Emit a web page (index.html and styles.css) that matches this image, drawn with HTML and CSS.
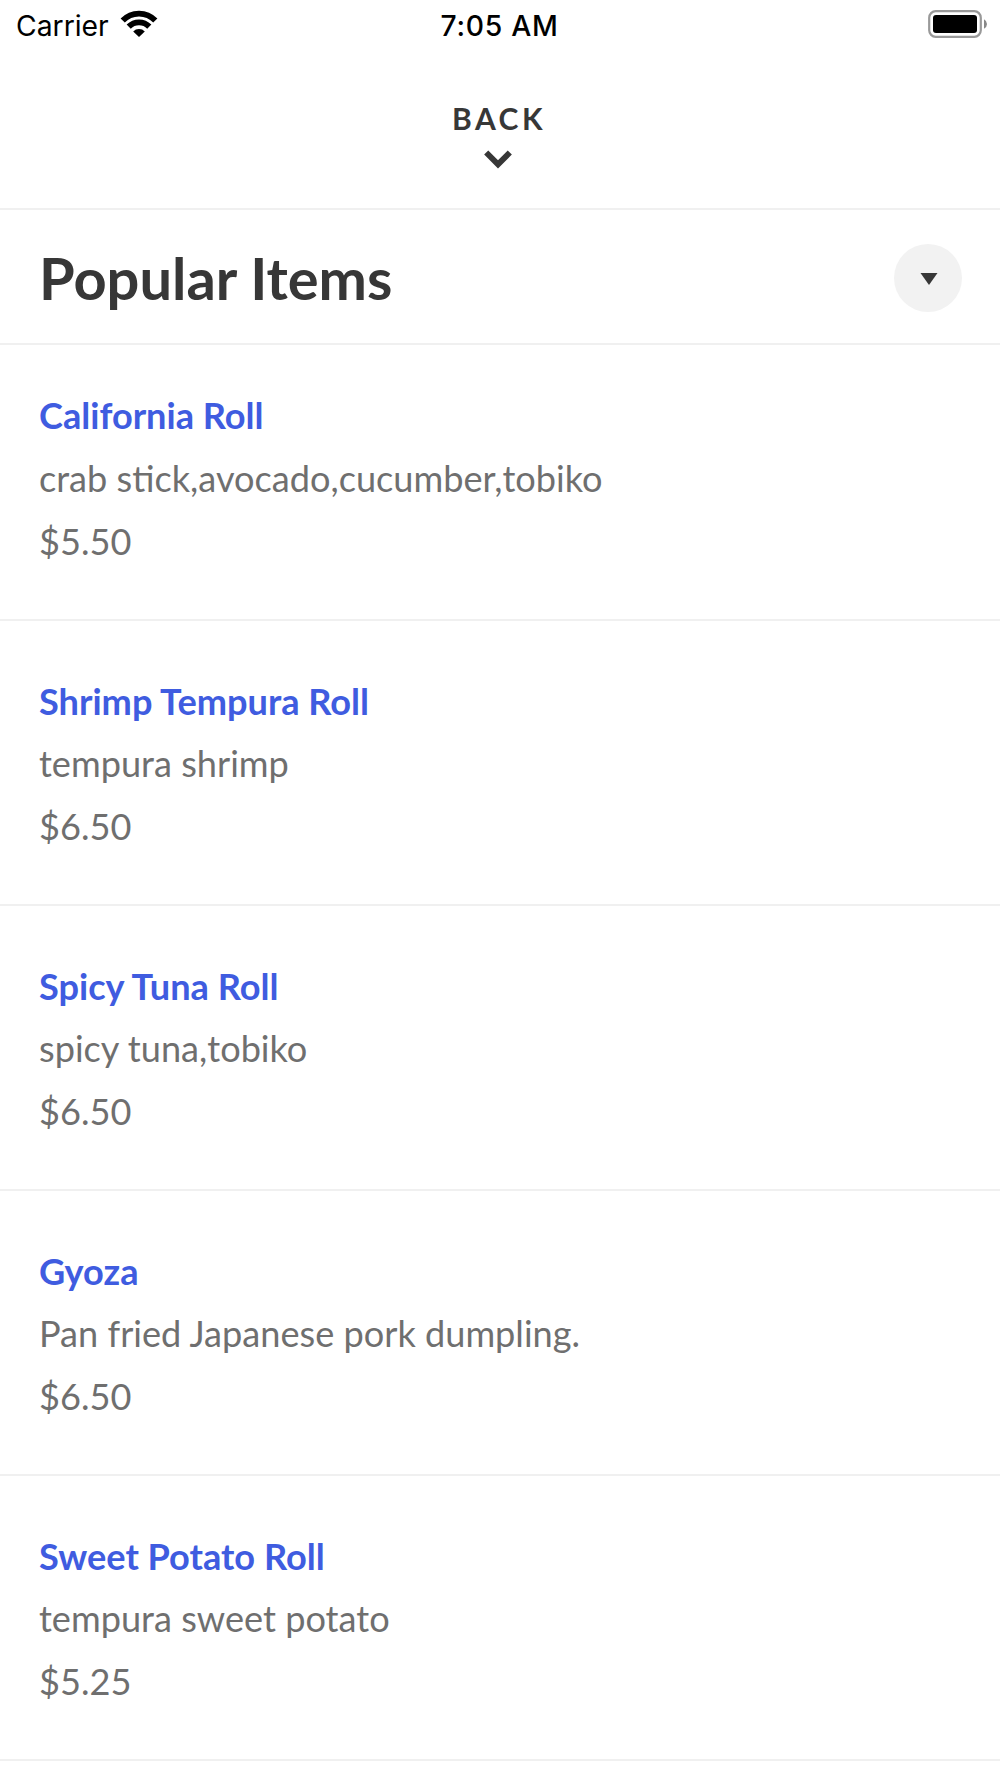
FILE: index.html
```
<!DOCTYPE html>
<html lang="en">
<head>
  <meta charset="utf-8">
  <title>Popular Items</title>
  <link rel="stylesheet" href="styles.css">
</head>
<body>
  <!-- Status bar -->
  <div class="status-bar">
    <div class="status-left">
      <span class="carrier">Carrier</span>
      <svg class="wifi" width="38" height="28" viewBox="0 0 38 28">
        <g fill="none" stroke="#000" stroke-width="5.8">
          <path d="M2.7 10.6 A22.5 22.5 0 0 1 35.3 10.6"/>
          <path d="M8.7 16.6 A14.5 14.5 0 0 1 29.3 16.6"/>
        </g>
        <path d="M19 27 L13.2 21.4 A8 8 0 0 1 24.8 21.4 Z"/>
      </svg>
    </div>
    <div class="status-time">7:05 AM</div>
    <div class="status-right">
      <svg class="battery" width="60" height="28" viewBox="0 0 60 28">
        <rect x="1.2" y="1.2" width="51.6" height="25.6" rx="6.5" fill="none" stroke="#999" stroke-width="2.2"/>
        <rect x="5" y="5" width="44" height="18" rx="3"/>
        <path d="M56 9.3 Q59 11 59 14 Q59 17 56 18.7 Z" fill="#888"/>
      </svg>
    </div>
  </div>

  <div class="back">
    <span class="back-text">BACK</span>
    <svg class="chevron" width="28" height="19" viewBox="0 0 28 19">
      <path d="M2.2 2.5 L14 14.3 L25.8 2.5" fill="none" stroke="#373737" stroke-width="5.8"/>
    </svg>
  </div>

  <div class="category">
    <h1>Popular Items</h1>
    <div class="toggle">
      <svg width="18" height="12" viewBox="0 0 18 12">
        <path d="M0.5 0 H17.5 L9 12 Z" fill="#373737"/>
      </svg>
    </div>
  </div>

  <!-- Menu items -->
  <div class="menu">
    <div class="item">
      <h3>California Roll</h3>
      <p>crab stick,avocado,cucumber,tobiko</p>
      <p>$5.50</p>
    </div>
    <div class="item">
      <h3>Shrimp Tempura Roll</h3>
      <p>tempura shrimp</p>
      <p>$6.50</p>
    </div>
    <div class="item">
      <h3>Spicy Tuna Roll</h3>
      <p>spicy tuna,tobiko</p>
      <p>$6.50</p>
    </div>
    <div class="item">
      <h3>Gyoza</h3>
      <p>Pan fried Japanese pork dumpling.</p>
      <p>$6.50</p>
    </div>
    <div class="item">
      <h3>Sweet Potato Roll</h3>
      <p>tempura sweet potato</p>
      <p>$5.25</p>
    </div>
  </div>
</body>
</html>
```

FILE: styles.css
```
* {
  box-sizing: border-box;
}

body {
  margin: 0;
  background-color: #fff;
  color: #373737;
  font-family: Lato, sans-serif;
}

.status-bar {
  display: grid;
  grid-template-columns: 1fr auto 1fr;
  height: 53px;
  padding: 0 12px 0 16px;
  color: #000;
  font-family: Inter, sans-serif;
  font-size: 28.3px;
  line-height: 52px;
}

.status-left {
  display: flex;
}

.wifi {
  margin: 10px 0 0 11px;
}

.status-time {
  margin-right: 5px;
  font-weight: 500;
  letter-spacing: 0.7px;
}

.status-right {
  display: flex;
  justify-content: flex-end;
}

.battery {
  margin-top: 10px;
}

.back {
  display: flex;
  flex-direction: column;
  align-items: center;
  height: 157px;
  padding: 47px 2px 0 0;
  border-bottom: 2px solid #f0f0f0;
}

.back-text {
  font-size: 30px;
  font-weight: bold;
  line-height: 36px;
  letter-spacing: 3.5px;
}

.chevron {
  margin: 14px 2px 0 0;
}

.category {
  display: flex;
  justify-content: space-between;
  align-items: center;
  height: 135px;
  padding: 2px 38px 0 39px;
  border-bottom: 2px solid #f0f0f0;
}

.category h1 {
  margin: 0 0 1px;
  font-size: 57.8px;
  font-weight: bold;
}

.toggle {
  display: flex;
  justify-content: center;
  align-items: center;
  width: 68px;
  height: 68px;
  padding: 2px 0 0 1px;
  border-radius: 50%;
  background-color: #f2f2f2;
}

.item {
  height: 285px;
  padding: 48.5px 39px 0;
  border-bottom: 2px solid #f0f0f0;
}

.item:first-child {
  height: 276px;
  padding-top: 39.3px;
}

.item h3,
.item p {
  margin: 0;
  font-size: 36.15px;
  line-height: 62.67px;
}

.item h3 {
  color: #3f5ce0;
  font-weight: bold;
}

.item p {
  color: #6f6f6f;
}
```
